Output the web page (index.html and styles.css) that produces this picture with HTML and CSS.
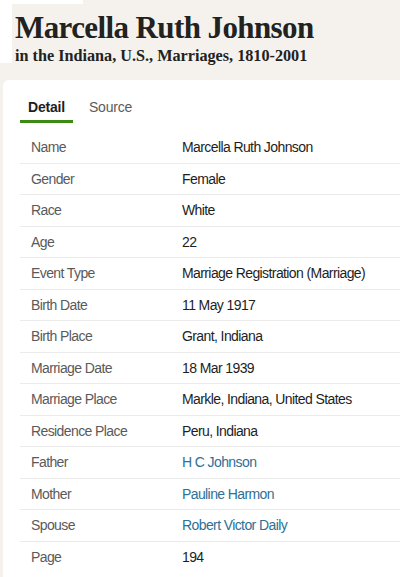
FILE: index.html
```html
<!DOCTYPE html>
<html>
<head>
<meta charset="utf-8">
<link rel="stylesheet" href="styles.css">
</head>
<body>
<div class="artifact artifact-top"></div>
<div class="artifact artifact-left"></div>
<header class="page-header">
  <h1 class="title">Marcella Ruth Johnson</h1>
  <p class="subtitle">in the Indiana, U.S., Marriages, 1810-2001</p>
</header>
<section class="card">
  <nav class="tabs">
    <span class="tab tab-active">Detail</span>
    <span class="tab">Source</span>
  </nav>
  <table class="details">
    <tr><th>Name</th><td>Marcella Ruth Johnson</td></tr>
    <tr><th>Gender</th><td>Female</td></tr>
    <tr><th>Race</th><td>White</td></tr>
    <tr><th>Age</th><td>22</td></tr>
    <tr><th>Event Type</th><td>Marriage Registration (Marriage)</td></tr>
    <tr><th>Birth Date</th><td>11 May 1917</td></tr>
    <tr><th>Birth Place</th><td>Grant, Indiana</td></tr>
    <tr><th>Marriage Date</th><td>18 Mar 1939</td></tr>
    <tr><th>Marriage Place</th><td>Markle, Indiana, United States</td></tr>
    <tr><th>Residence Place</th><td>Peru, Indiana</td></tr>
    <tr><th>Father</th><td><a class="link">H C Johnson</a></td></tr>
    <tr><th>Mother</th><td><a class="link">Pauline Harmon</a></td></tr>
    <tr><th>Spouse</th><td><a class="link">Robert Victor Daily</a></td></tr>
    <tr><th>Page</th><td>194</td></tr>
  </table>
</section>
</body>
</html>
```

FILE: styles.css
```css
html, body {
  margin: 0;
  padding: 0;
}
body {
  background: #f5f2ee;
  font-family: "Liberation Sans", Arial, sans-serif;
  overflow: hidden;
  width: 400px;
  height: 577px;
  position: relative;
}
.artifact {
  position: absolute;
  background: #ffffff;
  left: 0;
  top: 0;
}
.artifact-top {
  width: 83px;
  height: 4px;
}
.artifact-left {
  width: 12px;
  height: 63px;
}
.page-header {
  padding: 10px 0 0 15px;
}
.title {
  margin: 0;
  font-family: "Liberation Serif", "Times New Roman", serif;
  font-weight: bold;
  font-size: 31px;
  line-height: 36px;
  letter-spacing: -0.6px;
  color: #222220;
}
.subtitle {
  margin: 0;
  font-family: "Liberation Serif", "Times New Roman", serif;
  font-weight: bold;
  font-size: 16.2px;
  line-height: 20px;
  color: #222220;
}
.card {
  margin: 14px -30px 0 3px;
  background: #ffffff;
  border-radius: 6px;
  padding: 0 0 0 17px;
  min-height: 600px;
}
.tabs {
  display: flex;
  gap: 8px;
  padding-top: 19px;
}
.tab {
  font-size: 14px;
  line-height: 16px;
  padding: 0 8px 5px;
  color: #5b5b5b;
  letter-spacing: -0.2px;
  border-bottom: 3px solid transparent;
}
.tab-active {
  font-weight: bold;
  color: #1e1e1e;
  border-bottom-color: #3b8a12;
}
.details {
  margin-top: 8.5px;
  border-collapse: collapse;
  width: 100%;
}
.details tr {
  height: 31.5px;
  border-bottom: 1px solid #ececec;
}
.details tr:last-child {
  border-bottom: none;
}
.details th,
.details td {
  padding: 0;
  font-size: 14px;
  line-height: 16px;
  letter-spacing: -0.6px;
  text-align: left;
  vertical-align: middle;
}
.details th {
  width: 151px;
  padding-left: 11px;
  font-weight: normal;
  color: #5a5a5a;
}
.details td {
  color: #1e1e1e;
}
.link {
  color: #2d7196;
  text-decoration: none;
}
```
